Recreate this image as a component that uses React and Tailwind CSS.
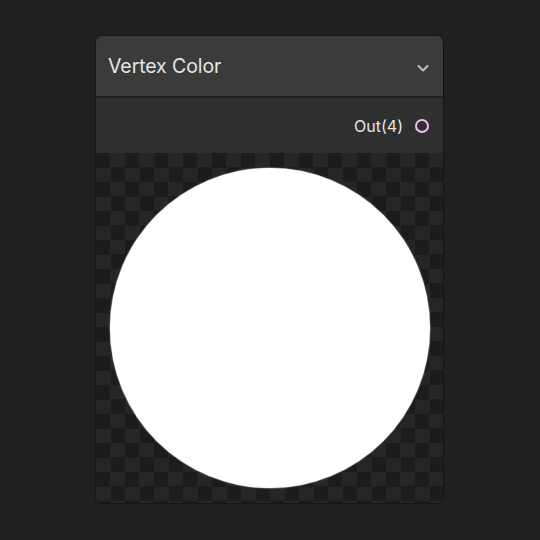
export default function App() {
  return (
    <div className="w-[540px] h-[540px] bg-[#202020] pt-[35px] pl-[95px]" style={{ fontFamily: "Inter, 'Liberation Sans', sans-serif" }}>
      <div className="w-[349px] h-[469px] rounded-[7px] border border-[#151515] bg-[#2e2e2e] overflow-hidden flex flex-col">
        <div className="h-[62px] bg-[#3b3b3b] border-b-2 border-[#222222] flex items-center justify-between pl-[12px] pr-[12px] shrink-0">
          <span className="text-[19.5px] text-[#e6e6e6] tracking-[-0.1px] mt-[2px]">Vertex Color</span>
          <svg width="14" height="14" viewBox="0 0 14 14" className="mt-[3px] mr-[1px]">
            <path d="M2.5 5 L7 9.5 L11.5 5" fill="none" stroke="#bdbdbd" strokeWidth="2" strokeLinecap="round" strokeLinejoin="round" />
          </svg>
        </div>
        <div className="h-[55px] flex items-center justify-end pr-[14px] shrink-0 bg-[#2f2f2f]">
          <span className="text-[16px] text-[#e6e6e6] mr-[12px]">Out(4)</span>
          <span className="w-[14px] h-[14px] rounded-full border-2 border-[#f2bfeb]"></span>
        </div>
        <div
          className="flex-1 flex items-center justify-center bg-[#1c1c1c]"
          style={{
            backgroundImage:
              "conic-gradient(#262626 25%, #1c1c1c 0 50%, #262626 0 75%, #1c1c1c 0)",
            backgroundSize: "29px 29px",
          }}
        >
          <div className="w-[320px] h-[320px] rounded-full bg-white shadow-[0_0_1px_0.5px_#9a9a9a]"></div>
        </div>
      </div>
    </div>
  );
}
